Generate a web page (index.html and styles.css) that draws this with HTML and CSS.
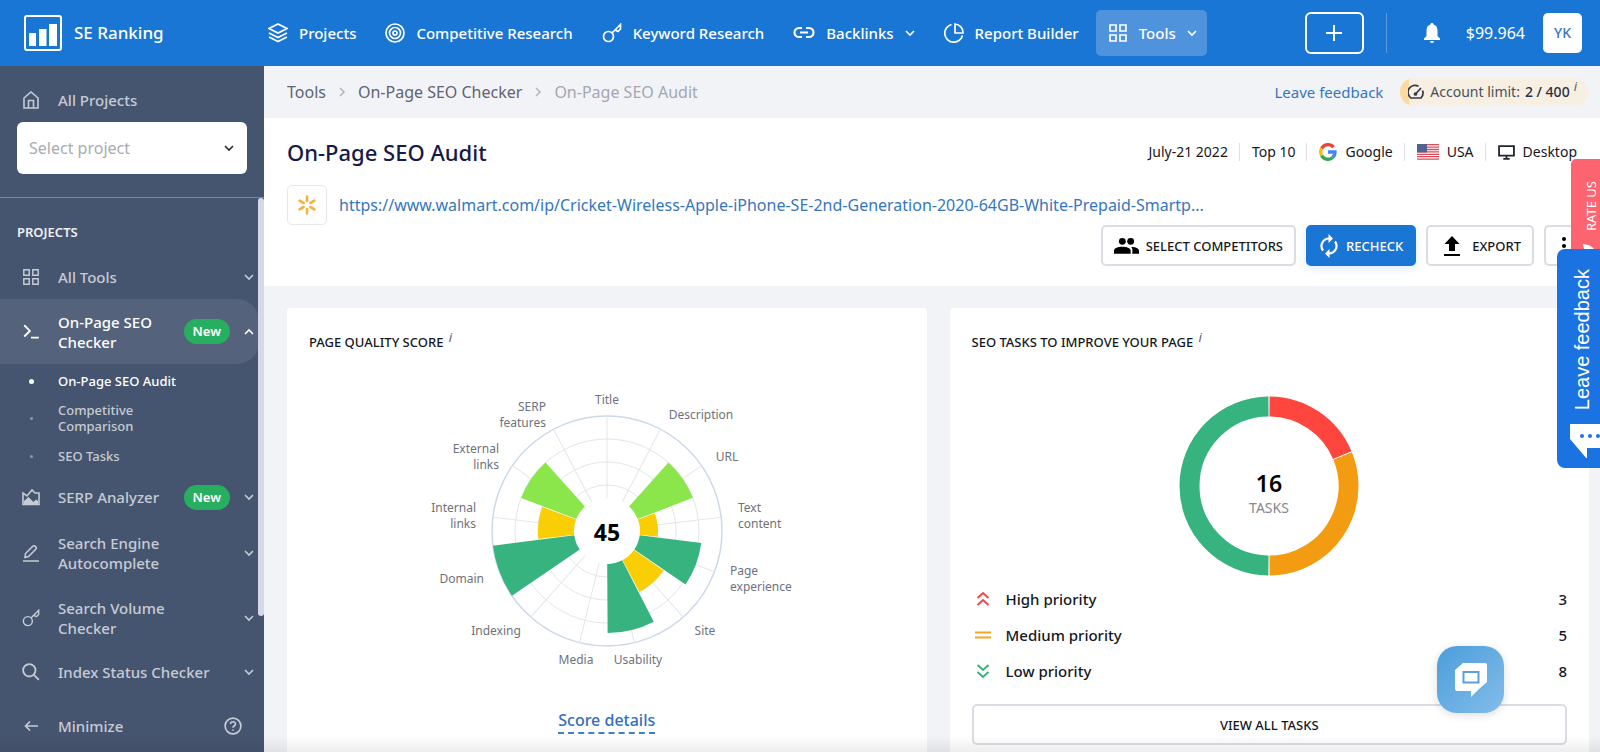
FILE: index.html
```html
<!DOCTYPE html>
<html lang="en">
<head>
<meta charset="utf-8">
<title>On-Page SEO Audit</title>
<link rel="stylesheet" href="styles.css">
</head>
<body>
<svg class="defs" aria-hidden="true">
  <symbol id="chev" viewBox="0 0 10 10"><path d="M1 3l4 4 4-4"/></symbol>
  <symbol id="chev-right" viewBox="0 0 10 10"><path d="M3 1l4 4-4 4"/></symbol>
  <symbol id="grid" viewBox="0 0 20 20"><path d="M2 2h6v6H2zM12 2h6v6h-6zM2 12h6v6H2zM12 12h6v6h-6z"/></symbol>
  <symbol id="key" viewBox="0 0 20 20"><circle cx="6.500" cy="13.500" r="5"/><path d="M10 10L18.500 1.500V6l-2.500 2.500L13 7"/></symbol>
</svg>
<div class="app">
  <header class="topbar">
    <a class="brand" href="#">
      <svg class="logo" viewBox="0 0 38 36"><rect x="1" y="1" width="36" height="34" rx="2" fill="none" stroke="#fff" stroke-width="2"/><path d="M5 18h7v13H5zM15 14h7.500v17H15zM25 9h8v22h-8z" fill="#fff"/></svg>
      SE Ranking
    </a>
    <nav class="nav">
      <a href="#"><svg class="ic" viewBox="0 0 20 20"><path d="M10 1l9 4.500-9 4.500-9-4.500zM1 10l9 4.500 9-4.500M1 14l9 4.500 9-4.500"/></svg>Projects</a>
      <a href="#"><svg class="ic" viewBox="0 0 20 20"><circle cx="10" cy="10" r="9"/><circle cx="10" cy="10" r="5.500"/><circle cx="10" cy="10" r="2"/></svg>Competitive Research</a>
      <a href="#"><svg class="ic"><use href="#key"/></svg>Keyword Research</a>
      <a href="#"><svg class="ic link" viewBox="0 0 22 20"><path d="M9 5H6a4.500 4.500 0 0 0 0 9h3M13 5h3a4.500 4.500 0 0 1 0 9h-3M7 9.500h8"/></svg>Backlinks<svg class="chev"><use href="#chev"/></svg></a>
      <a href="#"><svg class="ic" viewBox="0 0 20 20"><path d="M7.500 1.500A9 9 0 1 0 18.500 12.500M11 1v9h8a8.500 8.500 0 0 0-8-9z"/></svg>Report Builder</a>
      <a href="#" class="current"><svg class="ic"><use href="#grid"/></svg>Tools<svg class="chev"><use href="#chev"/></svg></a>
    </nav>
    <div class="account">
      <button class="add" aria-label="Add"><svg viewBox="0 0 18 18"><path d="M9 1v16M1 9h16"/></svg></button>
      <span class="rule"></span>
      <button class="bell" aria-label="Notifications"><svg viewBox="0 0 16 20"><path d="M8 0a1.500 1.500 0 0 1 1.500 1.600C12 2.300 13.500 4.500 13.500 7.500V13l2.500 2.500V17H0v-1.500L2.500 13V7.500C2.500 4.500 4 2.300 6.500 1.600A1.500 1.500 0 0 1 8 0zM6 18h4a2 2 0 0 1-4 0z"/></svg></button>
      <span class="balance">$99.964</span>
      <button class="avatar">YK</button>
    </div>
  </header>

  <aside class="sidebar">
    <div class="side-top">
      <a href="#" class="side-row"><svg class="sic" viewBox="0 0 16 18"><path d="M1 7l7-6 7 6v10H1zM5.500 17V9.500h5V17"/></svg>All Projects</a>
      <label class="picker"><select aria-label="Project"><option>Select project</option></select><svg class="chev"><use href="#chev"/></svg></label>
    </div>
    <div class="side-scroll">
      <h2>PROJECTS</h2>
      <a href="#" class="side-row"><svg class="sic"><use href="#grid"/></svg><span>All Tools</span><svg class="chev"><use href="#chev"/></svg></a>
      <a href="#" class="side-row two active"><svg class="sic" viewBox="0 0 16 16"><path d="M2 2l5 5-5 5M8 13h7"/></svg><span>On-Page SEO Checker</span><b class="new">New</b><svg class="chev up"><use href="#chev"/></svg></a>
      <ul class="sub">
        <li class="on"><a href="#">On-Page SEO Audit</a></li>
        <li><a href="#">Competitive Comparison</a></li>
        <li><a href="#">SEO Tasks</a></li>
      </ul>
      <a href="#" class="side-row tall"><svg class="sic area" viewBox="0 0 18 18"><path d="M1 16.500V5l4 3 5-6 3 3h4v11.500z"/><path class="solid" d="M2 16v-3l4.500-4 5 5 2.500-2.500 2 1.500v3z"/></svg><span>SERP Analyzer</span><b class="new">New</b><svg class="chev"><use href="#chev"/></svg></a>
      <a href="#" class="side-row two"><svg class="sic" viewBox="0 0 16 18"><path d="M0 17h16M2 13.500l.500-4L9.500 2.500q1.500-1.500 3 0t0 3L5.500 12.500z"/></svg><span>Search Engine Autocomplete</span><svg class="chev"><use href="#chev"/></svg></a>
      <a href="#" class="side-row two"><svg class="sic"><use href="#key"/></svg><span>Search Volume Checker</span><svg class="chev"><use href="#chev"/></svg></a>
      <a href="#" class="side-row"><svg class="sic" viewBox="0 0 16 16"><circle cx="6.500" cy="6.500" r="5.500"/><path d="M10.500 10.500L15 15"/></svg><span>Index Status Checker</span><svg class="chev"><use href="#chev"/></svg></a>
      <i class="thumb"></i>
    </div>
    <div class="side-bottom">
      <button class="side-row"><svg class="sic" viewBox="0 0 18 18"><path d="M16 9H4M8 4.500L3.500 9l4.500 4.500"/></svg><span>Minimize</span></button>
      <button class="help" aria-label="Help"><svg viewBox="0 0 16 16"><circle cx="8" cy="8" r="7"/><path d="M5.800 6.300C5.800 3.500 10.300 3.600 10.200 6.200 10.200 7.800 8 7.700 8 9.500M8 11v1.300"/></svg></button>
    </div>
  </aside>

  <main class="main">
    <div class="crumbs">
      <a href="#">Tools</a><svg class="sep"><use href="#chev-right"/></svg>
      <a href="#">On-Page SEO Checker</a><svg class="sep"><use href="#chev-right"/></svg>
      <span class="here">On-Page SEO Audit</span>
      <a class="fb" href="#">Leave feedback</a>
      <span class="limit"><svg viewBox="0 0 16 16"><path d="M10.500 2.200A7 7 0 0 0 3 14h10a7 7 0 0 0 1.500-7.500M7.500 10L13 4"/><circle cx="7.500" cy="10" r="1"/></svg>Account limit: <b>2 / 400</b><sup>i</sup></span>
    </div>

    <section class="head">
      <div class="head-row">
        <h1>On-Page SEO Audit</h1>
        <ul class="facts">
          <li>July-21 2022</li>
          <li>Top 10</li>
          <li><svg class="g" viewBox="0 0 18 18"><g fill="none" stroke-width="3.300"><path d="M14.500 4.200A7.200 7.200 0 0 0 2.600 5.600" stroke="#ea4335"/><path d="M2.600 5.600a7.200 7.200 0 0 0 0 6.800" stroke="#fbbc05"/><path d="M2.600 12.400a7.200 7.200 0 0 0 10.800 2.300" stroke="#34a853"/><path d="M13.400 14.700A7.200 7.200 0 0 0 16 9H9" stroke="#4285f4"/></g></svg>Google</li>
          <li><svg class="flag" viewBox="0 0 22 16"><path fill="#fff" d="M0 0h22v16H0z"/><path stroke="#dd4b57" stroke-width="1.300" d="M0 .7h22M0 3.100h22M0 5.500h22M0 7.900h22M0 10.300h22M0 12.700h22M0 15.200h22"/><path fill="#56618f" d="M0 0h10v8.500H0z"/></svg>USA</li>
          <li><svg class="pc" viewBox="0 0 16 16"><path d="M1 2h14v9H1zM8 11v3M5 14h6"/></svg>Desktop</li>
        </ul>
      </div>
      <div class="url-row">
        <span class="fav"><svg viewBox="0 0 20 20"><path d="M10 1.500V6M10 14v4.500M2.600 5.700l4 2.300M13.400 12l4 2.300M2.600 14.300l4-2.300M13.400 8l4-2.300"/></svg></span>
        <a href="#">https://www.walmart.com/ip/Cricket-Wireless-Apple-iPhone-SE-2nd-Generation-2020-64GB-White-Prepaid-Smartp...</a>
      </div>
      <div class="actions">
        <button class="btn"><svg class="people" viewBox="0 0 24 16"><circle cx="8" cy="4" r="3.300"/><circle cx="16" cy="4" r="3.300"/><path d="M0 16v-3c0-5 16-5 16 0v3zM17.500 16h6.500v-3c0-2.500-4-3.800-7.500-3.600 1 1 1.200 2 1.200 3.600z"/></svg>SELECT COMPETITORS</button>
        <button class="btn primary"><svg class="sync" viewBox="0 0 20 24"><path fill="none" stroke="#fff" stroke-width="2.200" d="M10 4.500A7.500 7.500 0 0 0 4 16.500M10 19.500A7.500 7.500 0 0 0 16 7.500"/><path fill="#fff" d="M9.500 0v9l4.500-4.500zM10.500 15v9L6 19.500z"/></svg>RECHECK</button>
        <button class="btn"><svg class="up-arrow" viewBox="0 0 18 20"><path d="M9 0L1.500 8H6v7h6V8h4.500zM1 18h16v2H1z"/></svg>EXPORT</button>
        <button class="btn more" aria-label="More"><svg viewBox="0 0 6 20"><circle cx="3" cy="3" r="2"/><circle cx="3" cy="10" r="2"/><circle cx="3" cy="17" r="2"/></svg></button>
      </div>
    </section>

    <div class="cards">
      <section class="card score">
        <h2>PAGE QUALITY SCORE <sup>i</sup></h2>
        <svg class="radar" viewBox="-200 -150 400 290">
          <g class="rings"><circle r="46"/><circle r="69"/><circle r="92"/></g>
          <circle class="rim" r="115"/>
          <g class="spokes">
            <path d="M0-33V-115"/><path d="M0-33V-115" transform="rotate(27.700)"/><path d="M0-33V-115" transform="rotate(55.400)"/><path d="M0-33V-115" transform="rotate(83.100)"/><path d="M0-33V-115" transform="rotate(110.800)"/><path d="M0-33V-115" transform="rotate(138.500)"/><path d="M0-33V-115" transform="rotate(166.200)"/><path d="M0-33V-115" transform="rotate(193.800)"/><path d="M0-33V-115" transform="rotate(221.500)"/><path d="M0-33V-115" transform="rotate(249.200)"/><path d="M0-33V-115" transform="rotate(276.900)"/><path d="M0-33V-115" transform="rotate(304.600)"/><path d="M0-33V-115" transform="rotate(332.300)"/>
          </g>
          <g class="wedges">
            <circle class="lime" r="62.500" stroke-width="59" pathLength="360" transform="rotate(-48.100)"/>
            <circle class="gold" r="42" stroke-width="18" pathLength="360" transform="rotate(-20.400)"/>
            <circle class="green" r="64" stroke-width="62" pathLength="360" transform="rotate(7.300)"/>
            <circle class="gold" r="51" stroke-width="36" pathLength="360" transform="rotate(35)"/>
            <circle class="green" r="67.500" stroke-width="69" pathLength="360" transform="rotate(62.700)"/>
            <circle class="green" r="74" stroke-width="82" pathLength="360" transform="rotate(145.700)"/>
            <circle class="gold" r="51" stroke-width="36" pathLength="360" transform="rotate(173.400)"/>
            <circle class="lime" r="62.500" stroke-width="59" pathLength="360" transform="rotate(201.100)"/>
          </g>
          <text class="total" y="10" text-anchor="middle">45</text>
          <g class="labels">
            <g text-anchor="middle"><text x="0" y="-127">Title</text><text x="94" y="-112">Description</text><text x="120" y="-70">URL</text><text x="98" y="104">Site</text><text x="31" y="133">Usability</text><text x="-31" y="133">Media</text><text x="-111" y="104">Indexing</text></g>
            <g text-anchor="start"><text x="131" y="-19">Text</text><text x="131" y="-3">content</text><text x="123" y="44">Page</text><text x="123" y="60">experience</text></g>
            <g text-anchor="end"><text x="-61" y="-120">SERP</text><text x="-61" y="-104">features</text><text x="-108" y="-78">External</text><text x="-108" y="-62">links</text><text x="-131" y="-19">Internal</text><text x="-131" y="-3">links</text><text x="-123" y="52">Domain</text></g>
          </g>
        </svg>
        <a href="#" class="details">Score details</a>
      </section>

      <section class="card tasks">
        <h2>SEO TASKS TO IMPROVE YOUR PAGE <sup>i</sup></h2>
        <svg class="donut" viewBox="-90 -90 180 180">
          <g fill="none" stroke-width="20">
            <circle r="79.500" pathLength="360" stroke="#ff463e" stroke-dasharray="66.700 360" transform="rotate(-89.600)"/>
            <circle r="79.500" pathLength="360" stroke="#f39c12" stroke-dasharray="111.700 360" transform="rotate(-22.100)"/>
            <circle r="79.500" pathLength="360" stroke="#36b37e" stroke-dasharray="179.200 360" transform="rotate(90.400)"/>
          </g>
          <text class="count" y="6" text-anchor="middle">16</text>
          <text class="unit" y="27" text-anchor="middle">TASKS</text>
        </svg>
        <dl class="levels">
          <div><svg class="high" viewBox="0 0 16 16"><path d="M2.500 7L8 2l5.500 5M2.500 14L8 9l5.500 5"/></svg><dt>High priority</dt><dd>3</dd></div>
          <div><svg class="mid" viewBox="0 0 16 16"><path d="M0 5.500h16M0 10.500h16"/></svg><dt>Medium priority</dt><dd>5</dd></div>
          <div><svg class="low" viewBox="0 0 16 16"><path d="M2.500 2L8 7l5.500-5M2.500 9L8 14l5.500-5"/></svg><dt>Low priority</dt><dd>8</dd></div>
        </dl>
        <button class="btn wide">VIEW ALL TASKS</button>
      </section>
    </div>
  </main>
</div>
<div class="fade"></div>
<button class="rate">RATE US<svg viewBox="0 0 16 16"><path d="M0 0h13L16 15Q2 14 0 2z"/></svg></button>
<button class="feedback"><svg viewBox="0 0 36 34"><path fill="#fff" d="M0 0h36v24H17v11L0 15z"/><g fill="#1a73e0"><circle cx="12" cy="12" r="2"/><circle cx="20" cy="12" r="2"/><circle cx="28" cy="12" r="2"/></g></svg><span>Leave feedback</span></button>
<button class="chat" aria-label="Chat"><svg viewBox="0 0 34 36"><path fill="#fff" d="M9 1h22q2 0 2 2v17l-8 7-8 8v-6H3q-2 0-2-2V8z"/><path fill="#fff" stroke="#5ba0da" stroke-width="2" d="M9.500 10h15v10.500h-15z"/></svg></button>
</body>
</html>
```
FILE: styles.css
```css
* { box-sizing: border-box; margin: 0; }
body { font: 16px/20px "Noto Sans", "Open Sans", sans-serif; color: #151823; overflow: hidden; }
a { color: inherit; text-decoration: none; }
button, select { font: inherit; color: inherit; cursor: pointer; }
button { border: 0; background: none; padding: 0; }
ul { list-style: none; padding: 0; }
svg { flex: none; }
.defs { position: absolute; width: 0; height: 0; }
.chev { width: 10px; height: 10px; fill: none; stroke: currentColor; stroke-width: 1.6; }
sup { font: italic 13px/13px "Noto Sans", sans-serif; color: #5a5e6b; }

.app { display: grid; grid-template: auto 1fr / 264px 1fr; height: 100vh; }

.topbar { grid-column: 1 / 3; display: flex; align-items: center; height: 66px; padding: 0 18px 0 24px; background: #1976d4; color: #fff; font-size: 15px; font-weight: 500; }
.brand { display: flex; align-items: center; gap: 12px; width: 244px; font-size: 17px; }
.logo { width: 38px; height: 36px; }
.nav { display: flex; align-items: center; gap: 29px; white-space: nowrap; }
.nav a { display: flex; align-items: center; gap: 11px; }
.nav .ic { width: 20px; height: 20px; fill: none; stroke: #fff; stroke-width: 1.7; }
.nav .link { width: 22px; stroke-width: 2.2; }
.nav .current { height: 46px; margin-left: -12px; padding: 0 10px 0 12px; background: #4f93dd; border-radius: 5px; }
.account { display: flex; align-items: center; margin-left: auto; }
.add { display: grid; place-items: center; width: 59px; height: 42px; border: 2px solid #fff; border-radius: 6px; }
.add svg { width: 18px; height: 18px; stroke: #fff; stroke-width: 2; }
.rule { width: 1px; height: 40px; margin: 0 37px 0 22px; background: #5b9ce0; }
.bell svg { display: block; width: 16px; height: 20px; fill: #fff; }
.balance { margin: 0 18px 0 26px; font-size: 16px; font-weight: 400; }
.avatar { width: 39px; height: 40px; background: #fff; border-radius: 5px; color: #3576bd; font-size: 14px; font-weight: 500; }

.sidebar { display: flex; flex-direction: column; min-height: 0; background: #46556f; color: #c6cbd4; font-size: 15px; font-weight: 500; }
.side-top { padding: 12px 17px 23px; border-bottom: 1px solid #7a869a; }
.side-row { display: flex; align-items: center; min-height: 44px; padding: 0 5px 0 22px; text-align: left; }
.side-row > span { width: 122px; flex: 1; }
.side-top .side-row { padding-left: 5px; }
.sic { width: 18px; height: 18px; margin-right: 18px; fill: none; stroke: currentColor; stroke-width: 1.6; }
.sic .solid { fill: currentColor; stroke: none; }
.picker { position: relative; display: block; font-size: 16px; color: #22252e; }
.picker select { display: block; width: 100%; height: 52px; padding: 0 12px; appearance: none; background: #fff; border: 0; border-radius: 6px; color: #a9abb2; font-weight: 400; }
.picker .chev { position: absolute; right: 13px; top: 21px; }
.side-scroll { position: relative; flex: 1; min-height: 0; padding-right: 5px; overflow: hidden; }
.side-scroll h2 { padding: 24px 17px 13px; font-size: 13px; font-weight: 600; color: #eef0f4; }
.side-row.two { min-height: 65px; }
.side-row.two > span { max-width: 122px; }
.side-row.tall { min-height: 46px; }
.side-row .chev { margin-left: auto; }
.new { height: 25px; margin-right: 14px; margin-left: auto; padding: 0 9px; background: #27ae60; border-radius: 13px; color: #fff; font-size: 13px; line-height: 25px; font-weight: 600; }
.side-row .new + .chev { margin-left: 0; }
.active { background: #54627b; color: #fff; border-radius: 0 22px 22px 0; }
.chev.up { transform: rotate(180deg); }
.sub li { display: flex; align-items: center; min-height: 34px; font-size: 13px; line-height: 16px; }
.sub li a { width: 130px; }
.sub li + li { padding-bottom: 2px; }
.sub li:nth-child(2) { min-height: 42px; }
.sub li::before { content: ""; width: 3px; height: 3px; margin: 0 25px 0 30px; border-radius: 50%; background: #8e98a8; }
.sub .on { color: #fff; white-space: nowrap; }
.sub .on::before { width: 5px; height: 5px; margin: 0 24px 0 29px; background: #fff; }
.thumb { position: absolute; right: 0; top: 0; width: 6px; height: 418px; border-radius: 3px; background: #d4d8e8; }
.side-bottom { display: flex; align-items: center; justify-content: space-between; padding: 0 22px 4px 0; }
.help svg { display: block; width: 18px; height: 18px; fill: none; stroke: #c6cbd4; stroke-width: 1.5; }

.main { min-width: 0; overflow: hidden; background: #f2f3f7; }
.crumbs { display: flex; align-items: center; height: 52px; padding: 0 12px 0 23px; color: #5f6472; white-space: nowrap; }
.sep { width: 10px; height: 10px; margin: 0 11px; fill: none; stroke: #b3b6bf; stroke-width: 1.6; }
.here { color: #a4a7b0; }
.fb { margin-left: auto; color: #3576bd; font-size: 15px; }
.limit { display: flex; align-items: center; height: 28px; margin-left: 17px; padding: 0 11px 0 8px; border-radius: 14px; background: linear-gradient(90deg, #fcd9a0 9px, #f6efe2 9px); font-size: 14px; color: #4b4f5c; }
.limit svg { width: 16px; height: 16px; margin-right: 6px; fill: none; stroke: #33384a; stroke-width: 1.7; }
.limit b { margin-left: 5px; font-weight: 500; color: #2b3042; }
.limit sup { margin: 0 0 12px 4px; }

.head { padding: 21px 0 20px 23px; background: #fff; }
.head-row { display: flex; align-items: center; justify-content: space-between; padding-right: 23px; }
h1 { font-size: 22px; line-height: 26px; font-weight: 500; color: #17194a; }
.facts { display: flex; align-items: center; font-size: 14px; line-height: 18px; white-space: nowrap; }
.facts li { display: flex; align-items: center; gap: 8px; }
.facts li + li { margin-left: 11px; padding-left: 12px; border-left: 1px solid #dfe0e5; }
.facts .g { width: 18px; height: 18px; }
.facts .flag { width: 22px; height: 16px; }
.facts .pc { width: 17px; height: 17px; fill: none; stroke: #22252e; stroke-width: 1.7; }
.url-row { display: flex; align-items: center; gap: 12px; margin-top: 20px; color: #3576bd; }
.fav { display: grid; place-items: center; width: 40px; height: 40px; border: 1px solid #e6e7ec; border-radius: 5px; }
.fav svg { width: 20px; height: 20px; stroke: #f6b23c; stroke-width: 2.6; stroke-linecap: round; }
.actions { display: flex; justify-content: flex-end; gap: 10px; }
.btn { display: flex; align-items: center; justify-content: center; gap: 7px; height: 41px; padding: 0 11px; border: 2px solid #dcdde4; border-radius: 5px; background: #fff; font-size: 13px; font-weight: 500; white-space: nowrap; }
.people { width: 25px; height: 17px; }
.sync { width: 20px; height: 24px; }
.up-arrow { width: 18px; height: 20px; margin: 0 4px; }
.primary { background: #1976d4; border-color: #1976d4; color: #fff; box-shadow: 0 3px 8px #1976d422; }
.more { width: 56px; padding-right: 30px; border-right: 0; border-radius: 5px 0 0 5px; }
.more svg { width: 6px; height: 20px; }

.cards { display: grid; grid-template-columns: 1fr 1fr; gap: 23px; padding: 22px 11px 23px 23px; }
.card { display: flex; flex-direction: column; align-items: center; min-height: 480px; padding: 23px 22px; background: #fff; border-radius: 4px; }
.card h2 { align-self: stretch; font-size: 13px; line-height: 22px; font-weight: 500; }
.card h2 sup { margin-left: 2px; }
.radar { width: 400px; height: 290px; margin-top: 28px; }
.rings circle, .spokes path { fill: none; stroke: #e4e6ea; }
.rim { fill: none; stroke: #cdd9e8; stroke-width: 1.5; }
.wedges circle { fill: none; stroke-dasharray: 27 360; }
.wedges .lime { stroke: #8ae64b; }
.wedges .gold { stroke: #f9ce04; }
.wedges .green { stroke: #36b37e; }
.total { font-size: 23px; font-weight: 700; }
.labels { font-size: 12px; fill: #6e727c; }
.details { margin-top: 39px; padding-bottom: 2px; border-bottom: 2px dashed #3f7fca; color: #2f70bd; font-weight: 500; line-height: 20px; }
.donut { width: 180px; height: 180px; margin-top: 43px; }
.count { font-size: 23px; font-weight: 600; }
.unit { font-size: 14px; fill: #84878e; }
.levels { align-self: stretch; margin-top: 5px; }
.levels div { display: flex; align-items: center; height: 36px; font-size: 15px; font-weight: 500; }
.levels svg { width: 16px; height: 16px; margin: 0 15px 0 3px; fill: none; stroke-width: 2; }
.levels dd { margin-left: auto; }
.high { stroke: #f0484a; }
.mid { stroke: #f5a623; }
.low { stroke: #36b37e; }
.wide { align-self: stretch; margin-top: 15px; }

.fade { position: fixed; left: 0; right: 0; bottom: 0; height: 16px; background: linear-gradient(#0000, #00000012); pointer-events: none; }
.rate { position: fixed; right: 0; top: 159px; display: flex; flex-direction: row-reverse; align-items: center; justify-content: flex-start; gap: 12px; width: 29px; height: 110px; padding: 0 10px 22px 0; background: #fc6470; border-radius: 0 5px 5px 0; color: #fff; font-size: 13px; writing-mode: vertical-rl; transform: rotate(180deg); }
.rate svg { width: 14px; height: 14px; fill: #fff; }
.feedback { position: fixed; right: 0; top: 249px; display: flex; flex-direction: column-reverse; align-items: flex-start; gap: 14px; width: 43px; height: 219px; padding: 16px 0 10px 13px; background: #1a73e0; border-radius: 8px 0 0 8px; color: #fff; overflow: hidden; }
.feedback svg { width: 36px; height: 34px; }
.feedback span { font: 20px/24px "Liberation Sans", Arial, sans-serif; writing-mode: vertical-rl; transform: rotate(180deg); white-space: nowrap; }
.chat { position: fixed; right: 96px; bottom: 39px; display: grid; place-items: center; width: 67px; height: 67px; border-radius: 20px; background: linear-gradient(135deg, #4b9edb, #84bce9); box-shadow: 0 2px 8px #00000022; }
.chat svg { width: 34px; height: 36px; }
```
